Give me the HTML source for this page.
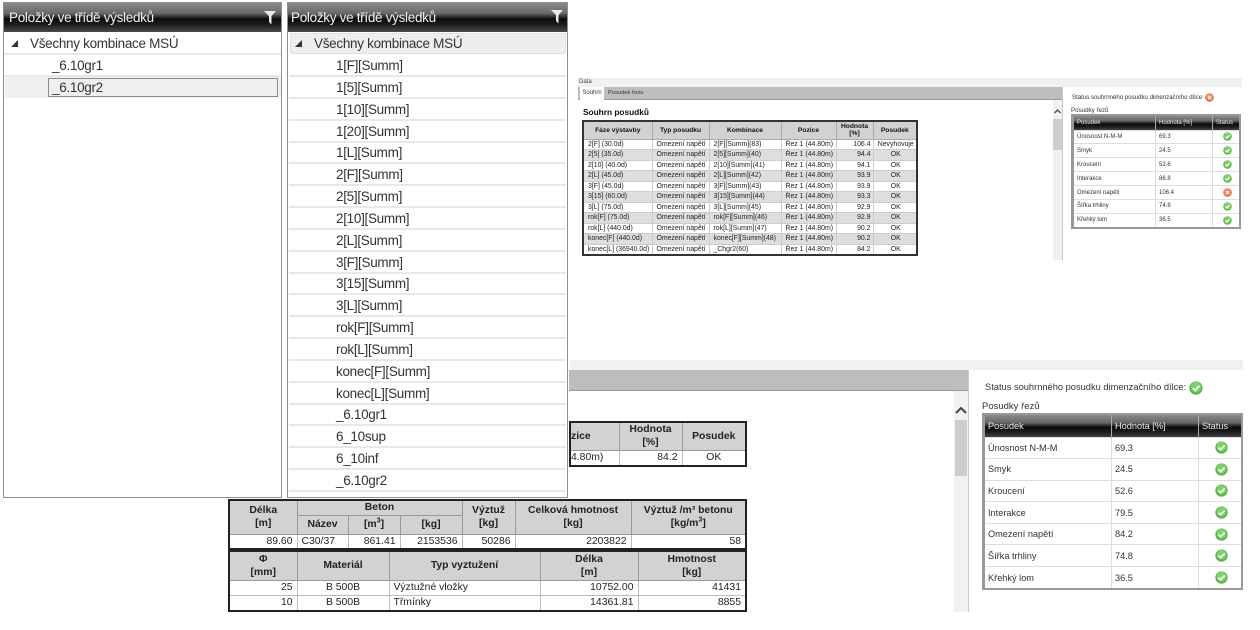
<!DOCTYPE html>
<html lang="cs"><head><meta charset="utf-8"><title>Posudky</title>
<style>
html,body{margin:0;padding:0;background:#fff}
#p{position:relative;width:1260px;height:630px;overflow:hidden;background:#fff;font-family:"Liberation Sans",sans-serif;color:#222}
#p div,#p span.a,#p svg.a{position:absolute;box-sizing:border-box}
.panel{border:1px solid #8f8f8f;background:#fff}
.hd{background:linear-gradient(#8a8a8a 0,#6a6a6a 35%,#0c0c0c 55%,#1c1c1c 75%,#4a4a4a 100%);color:#f2f2f2;font-size:13.5px;letter-spacing:-.3px;line-height:29px;padding-left:5px;white-space:nowrap}
.r{font-size:13.5px;letter-spacing:-.3px;line-height:21px;white-space:nowrap;border-bottom:2px solid #e6e9e9;color:#333}
table{position:absolute;border-collapse:collapse;table-layout:fixed;font-family:"Liberation Sans",sans-serif}
th,td{box-sizing:border-box}
.t3{left:582px;top:120px;width:336px;height:135px;border:2px solid #333;font-size:6.9px;color:#222}
.t3 th{background:#d2d2d2;border:1px solid #aaa;font-weight:bold;font-size:6.7px;line-height:7.5px;padding:0;color:#111}
.t3 td{border:1px solid #ccc;padding:0 2px 0 4px;white-space:nowrap;height:10.5px;line-height:9px;overflow:hidden}
.t3 tr.g td{background:#dedede}
.sm{border:2px solid #222;font-size:10.4px;color:#222}
.sm th{background:#d2d2d2;border:1px solid #999;font-weight:bold;padding:0;line-height:13px;color:#222}
.sm td{border:1px solid #bbb;padding:0 4px;white-space:nowrap;background:#fff;line-height:13px}
.st{border:2px solid #999;border-left-width:3px;color:#333}
.st th{background:linear-gradient(#8a8a8a 0,#666 35%,#0c0c0c 55%,#1c1c1c 78%,#444 100%);color:#e8e8e8;font-weight:normal;text-align:left;border-right:1px solid #aaa;padding:0 0 0 3px}
.st td{border:1px solid #ddd;padding:0 0 0 3px;white-space:nowrap}
.st td:last-child{padding:0 0 0 2px;text-align:center}
.st svg{display:block;margin:auto}
.st1{left:1071px;top:114px;width:170px;height:115px;font-size:6px}
.st2{left:982px;top:413px;width:261px;height:177px;font-size:9.2px}
.rt{text-align:right!important}.ct{text-align:center}
</style></head><body>
<svg width="0" height="0" style="position:absolute"><defs>
<symbol id="ok" viewBox="0 0 20 20"><circle cx="10" cy="10" r="9.5" fill="#5cb84a"/><circle cx="10" cy="8.5" r="7.5" fill="#7dd06a"/><path d="M5.500 10.200l3.200 3.200 6-6.400" fill="none" stroke="#fff" stroke-width="2.600"/></symbol>
<symbol id="no" viewBox="0 0 20 20"><circle cx="10" cy="10" r="9.500" fill="#e8663a"/><circle cx="10" cy="8.500" r="7.500" fill="#f28a60"/><path d="M6.500 6.500l7 7M13.500 6.500l-7 7" fill="none" stroke="#fff" stroke-width="2.400"/></symbol>
<symbol id="fl" viewBox="0 0 12 14"><path d="M0 0H12L7.500 5V13.500L5 11V5Z" fill="#eaeaea"/></symbol>
</defs></svg>
<div id="p" style="filter:blur(.35px)">

<!-- left panel -->
<div class="panel" style="left:3px;top:2px;width:279px;height:496px"></div>
<div class="hd" style="left:4px;top:3px;width:277px;height:29px">Položky ve třídě výsledků</div>
<svg class="a" style="left:264px;top:11px" width="12" height="14"><use href="#fl"/></svg>
<div class="r" style="left:4px;top:33px;width:277px;height:22px;padding-left:26px">Všechny kombinace MSÚ</div>
<div class="a" style="left:11px;top:40px;width:0;height:0;border-left:7px solid transparent;border-bottom:7px solid #333"></div>
<div class="r" style="left:4px;top:55px;width:277px;height:22px;padding-left:48px">_6.10gr1</div>
<div class="a" style="left:5px;top:77px;width:276px;height:21px;background:#f0f0f0"></div>
<div class="a" style="left:48px;top:78px;width:230px;height:19px;border:1px solid #8c8c8c;background:#efefef;font-size:13.5px;letter-spacing:-.3px;line-height:18px;padding-left:3px;color:#333">_6.10gr2</div>

<!-- second panel -->
<div class="panel" style="left:287px;top:2px;width:281px;height:496px"></div>
<div class="hd" style="left:288px;top:3px;width:279px;height:29px;padding-left:3px">Položky ve třídě výsledků</div>
<svg class="a" style="left:551px;top:10px" width="12" height="14"><use href="#fl"/></svg>
<div class="r" style="left:290px;top:33px;width:276px;height:21px;background:#eeeeee;border:1px solid #e0e0e0;padding-left:23px;line-height:20px">Všechny kombinace MSÚ</div>
<div class="a" style="left:295px;top:40px;width:0;height:0;border-left:7px solid transparent;border-bottom:7px solid #333"></div>
<div class="r" style="left:289px;top:55px;width:277px;height:22px;padding-left:47px">1[F][Summ]</div>
<div class="r" style="left:289px;top:77px;width:277px;height:22px;padding-left:47px">1[5][Summ]</div>
<div class="r" style="left:289px;top:99px;width:277px;height:22px;padding-left:47px">1[10][Summ]</div>
<div class="r" style="left:289px;top:121px;width:277px;height:22px;padding-left:47px">1[20][Summ]</div>
<div class="r" style="left:289px;top:142px;width:277px;height:22px;padding-left:47px">1[L][Summ]</div>
<div class="r" style="left:289px;top:164px;width:277px;height:22px;padding-left:47px">2[F][Summ]</div>
<div class="r" style="left:289px;top:186px;width:277px;height:22px;padding-left:47px">2[5][Summ]</div>
<div class="r" style="left:289px;top:208px;width:277px;height:22px;padding-left:47px">2[10][Summ]</div>
<div class="r" style="left:289px;top:230px;width:277px;height:22px;padding-left:47px">2[L][Summ]</div>
<div class="r" style="left:289px;top:252px;width:277px;height:22px;padding-left:47px">3[F][Summ]</div>
<div class="r" style="left:289px;top:273px;width:277px;height:22px;padding-left:47px">3[15][Summ]</div>
<div class="r" style="left:289px;top:295px;width:277px;height:22px;padding-left:47px">3[L][Summ]</div>
<div class="r" style="left:289px;top:317px;width:277px;height:22px;padding-left:47px">rok[F][Summ]</div>
<div class="r" style="left:289px;top:339px;width:277px;height:22px;padding-left:47px">rok[L][Summ]</div>
<div class="r" style="left:289px;top:361px;width:277px;height:22px;padding-left:47px">konec[F][Summ]</div>
<div class="r" style="left:289px;top:383px;width:277px;height:22px;padding-left:47px">konec[L][Summ]</div>
<div class="r" style="left:289px;top:404px;width:277px;height:22px;padding-left:47px">_6.10gr1</div>
<div class="r" style="left:289px;top:426px;width:277px;height:22px;padding-left:47px">6_10sup</div>
<div class="r" style="left:289px;top:448px;width:277px;height:22px;padding-left:47px">6_10inf</div>
<div class="r" style="left:289px;top:470px;width:277px;height:22px;padding-left:47px">_6.10gr2</div>

<!-- top window -->
<div class="a" style="left:578px;top:78px;width:664px;height:9px;background:#f1f1f1;font-size:6px;line-height:9px;padding-left:1px;color:#444">Data</div>
<div class="a" style="left:578px;top:87px;width:484px;height:13px;background:#bdbdbd;border-bottom:1px solid #999"></div>
<div class="a" style="left:580px;top:87px;width:24px;height:13px;background:#fff;font-size:6px;line-height:13px;text-align:center;color:#333">Souhrn</div>
<div class="a" style="left:608px;top:87px;width:50px;height:13px;font-size:5.8px;line-height:13px;white-space:nowrap;color:#333">Posudek řezu</div>
<div class="a" style="left:1053px;top:100px;width:9px;height:160px;background:#f1f1f1"></div>
<div class="a" style="left:1053px;top:119px;width:9px;height:31px;background:#cdcdcd"></div>
<svg class="a" style="left:1054px;top:109px" width="7" height="5"><path d="M.5 4L3.500 1l3 3" fill="none" stroke="#444" stroke-width="1.300"/></svg>
<div class="a" style="left:1062px;top:87px;width:1px;height:173px;background:#c8c8c8"></div>
<div class="a" style="left:583px;top:107px;font-size:8.300px;font-weight:bold;white-space:nowrap;color:#111;line-height:10px">Souhrn posudků</div>

<table class="t3"><colgroup><col style="width:69px"><col style="width:57px"><col style="width:72px"><col style="width:55px"><col style="width:37px"><col></colgroup>
<tr style="height:18px"><th>Fáze výstavby</th><th>Typ posudku</th><th>Kombinace</th><th>Pozice</th><th>Hodnota<br>[%]</th><th>Posudek</th></tr>
<tr><td>2[F] (30.0d)</td><td>Omezení napětí</td><td>2[F][Summ](83)</td><td>Řez 1 (44.80m)</td><td class="rt">106.4</td><td class="ct">Nevyhovuje</td></tr>
<tr class="g"><td>2[5] (35.0d)</td><td>Omezení napětí</td><td>2[5][Summ](40)</td><td>Řez 1 (44.80m)</td><td class="rt">94.4</td><td class="ct">OK</td></tr>
<tr><td>2[10] (40.0d)</td><td>Omezení napětí</td><td>2[10][Summ](41)</td><td>Řez 1 (44.80m)</td><td class="rt">94.1</td><td class="ct">OK</td></tr>
<tr class="g"><td>2[L] (45.0d)</td><td>Omezení napětí</td><td>2[L][Summ](42)</td><td>Řez 1 (44.80m)</td><td class="rt">93.9</td><td class="ct">OK</td></tr>
<tr><td>3[F] (45.0d)</td><td>Omezení napětí</td><td>3[F][Summ](43)</td><td>Řez 1 (44.80m)</td><td class="rt">93.9</td><td class="ct">OK</td></tr>
<tr class="g"><td>3[15] (60.0d)</td><td>Omezení napětí</td><td>3[15][Summ](44)</td><td>Řez 1 (44.80m)</td><td class="rt">93.3</td><td class="ct">OK</td></tr>
<tr><td>3[L] (75.0d)</td><td>Omezení napětí</td><td>3[L][Summ](45)</td><td>Řez 1 (44.80m)</td><td class="rt">92.9</td><td class="ct">OK</td></tr>
<tr class="g"><td>rok[F] (75.0d)</td><td>Omezení napětí</td><td>rok[F][Summ](46)</td><td>Řez 1 (44.80m)</td><td class="rt">92.9</td><td class="ct">OK</td></tr>
<tr><td>rok[L] (440.0d)</td><td>Omezení napětí</td><td>rok[L][Summ](47)</td><td>Řez 1 (44.80m)</td><td class="rt">90.2</td><td class="ct">OK</td></tr>
<tr class="g"><td>konec[F] (440.0d)</td><td>Omezení napětí</td><td>konec[F][Summ](48)</td><td>Řez 1 (44.80m)</td><td class="rt">90.2</td><td class="ct">OK</td></tr>
<tr><td>konec[L] (36940.0d)</td><td>Omezení napětí</td><td>_Chgr2(60)</td><td>Řez 1 (44.80m)</td><td class="rt">84.2</td><td class="ct">OK</td></tr>
</table>

<div class="a" style="left:1072px;top:93px;font-size:6.100px;line-height:10px;white-space:nowrap;color:#333">Status souhrnného posudku dimenzačního dílce:</div>
<svg class="a" style="left:1205px;top:93px" width="9" height="9"><use href="#no"/></svg>
<div class="a" style="left:1071px;top:106px;font-size:6.200px;line-height:9px;white-space:nowrap;color:#333">Posudky řezů</div>
<table class="st st1"><colgroup><col style="width:83px"><col style="width:57px"><col></colgroup>
<tr style="height:15px"><th>Posudek</th><th>Hodnota [%]</th><th>Status</th></tr>
<tr><td>Únosnost N-M-M</td><td>69.3</td><td><svg width="9" height="9"><use href="#ok"/></svg></td></tr>
<tr><td>Smyk</td><td>24.5</td><td><svg width="9" height="9"><use href="#ok"/></svg></td></tr>
<tr><td>Kroucení</td><td>52.6</td><td><svg width="9" height="9"><use href="#ok"/></svg></td></tr>
<tr><td>Interakce</td><td>86.8</td><td><svg width="9" height="9"><use href="#ok"/></svg></td></tr>
<tr><td>Omezení napětí</td><td>106.4</td><td><svg width="9" height="9"><use href="#no"/></svg></td></tr>
<tr><td>Šířka trhliny</td><td>74.8</td><td><svg width="9" height="9"><use href="#ok"/></svg></td></tr>
<tr><td>Křehký lom</td><td>36.5</td><td><svg width="9" height="9"><use href="#ok"/></svg></td></tr>
</table>

<!-- bottom window -->
<div class="a" style="left:570px;top:360px;width:673px;height:10px;background:#f1f1f1"></div>
<div class="a" style="left:569px;top:370px;width:400px;height:21px;background:#bdbdbd;border-bottom:1px solid #999"></div>
<div class="a" style="left:954px;top:391px;width:14px;height:221px;background:#f1f1f1"></div>
<div class="a" style="left:955px;top:420px;width:12px;height:56px;background:#cdcdcd"></div>
<svg class="a" style="left:955px;top:406px" width="12" height="8"><path d="M1 7L6 2l5 5" fill="none" stroke="#444" stroke-width="2"/></svg>
<div class="a" style="left:968px;top:370px;width:1px;height:242px;background:#c8c8c8"></div>

<table class="sm" style="left:569px;top:421px;width:178px;height:46px"><colgroup><col style="width:49px"><col style="width:63px"><col></colgroup>
<tr style="height:28px"><th style="text-align:left;padding-left:0">zice</th><th>Hodnota<br>[%]</th><th>Posudek</th></tr>
<tr><td style="padding:0">4.80m)</td><td class="rt">84.2</td><td class="ct">OK</td></tr>
</table>

<table class="sm" style="left:228px;top:499px;width:519px;height:50px"><colgroup><col style="width:68px"><col style="width:51px"><col style="width:52px"><col style="width:62px"><col style="width:53px"><col style="width:116px"><col></colgroup>
<tr style="height:15px"><th rowspan="2">Délka<br>[m]</th><th colspan="3">Beton</th><th rowspan="2">Výztuž<br>[kg]</th><th rowspan="2">Celková hmotnost<br>[kg]</th><th rowspan="2">Výztuž /m³ betonu<br>[kg/m<sup style="font-size:7px;line-height:0">3</sup>]</th></tr>
<tr style="height:19px"><th>Název</th><th>[m<sup style="font-size:7px;line-height:0">3</sup>]</th><th>[kg]</th></tr>
<tr><td class="rt">89.60</td><td>C30/37</td><td class="rt">861.41</td><td class="rt">2153536</td><td class="rt">50286</td><td class="rt">2203822</td><td class="rt">58</td></tr>
</table>

<table class="sm" style="left:228px;top:550px;width:519px;height:62px"><colgroup><col style="width:68px"><col style="width:92px"><col style="width:151px"><col style="width:98px"><col></colgroup>
<tr style="height:29px"><th>Φ<br>[mm]</th><th>Materiál</th><th>Typ vyztužení</th><th>Délka<br>[m]</th><th>Hmotnost<br>[kg]</th></tr>
<tr><td class="rt">25</td><td class="ct">B 500B</td><td>Výztužné vložky</td><td class="rt">10752.00</td><td class="rt">41431</td></tr>
<tr><td class="rt">10</td><td class="ct">B 500B</td><td>Třmínky</td><td class="rt">14361.81</td><td class="rt">8855</td></tr>
</table>

<div class="a" style="left:985px;top:381px;font-size:9.300px;line-height:13px;white-space:nowrap;color:#333">Status souhrnného posudku dimenzačního dílce:</div>
<svg class="a" style="left:1189px;top:381px" width="14" height="14"><use href="#ok"/></svg>
<div class="a" style="left:982px;top:401px;font-size:9.500px;line-height:12px;white-space:nowrap;color:#333">Posudky řezů</div>
<table class="st st2"><colgroup><col style="width:128px"><col style="width:87px"><col></colgroup>
<tr style="height:23px"><th>Posudek</th><th>Hodnota [%]</th><th>Status</th></tr>
<tr><td>Únosnost N-M-M</td><td>69.3</td><td><svg width="13" height="13"><use href="#ok"/></svg></td></tr>
<tr><td>Smyk</td><td>24.5</td><td><svg width="13" height="13"><use href="#ok"/></svg></td></tr>
<tr><td>Kroucení</td><td>52.6</td><td><svg width="13" height="13"><use href="#ok"/></svg></td></tr>
<tr><td>Interakce</td><td>79.5</td><td><svg width="13" height="13"><use href="#ok"/></svg></td></tr>
<tr><td>Omezení napětí</td><td>84.2</td><td><svg width="13" height="13"><use href="#ok"/></svg></td></tr>
<tr><td>Šířka trhliny</td><td>74.8</td><td><svg width="13" height="13"><use href="#ok"/></svg></td></tr>
<tr><td>Křehký lom</td><td>36.5</td><td><svg width="13" height="13"><use href="#ok"/></svg></td></tr>
</table>
</div>
</body></html>
